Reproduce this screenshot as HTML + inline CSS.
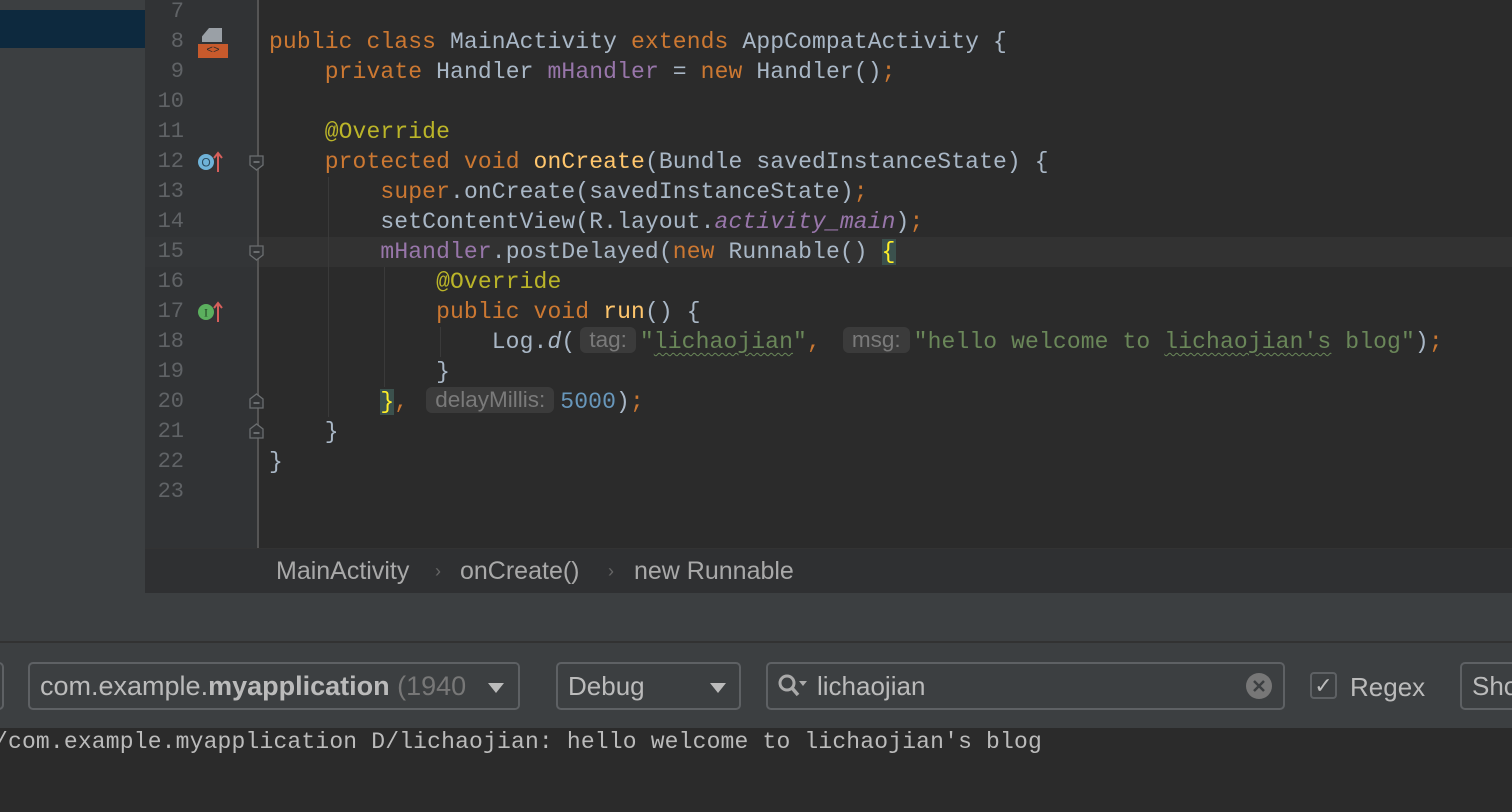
<!DOCTYPE html>
<html><head><meta charset="utf-8"><style>
*{margin:0;padding:0;box-sizing:border-box}
body{width:1512px;height:812px;overflow:hidden;background:#2b2b2b;position:relative;font-family:"Liberation Sans",sans-serif}
.abs{position:absolute}
.code{position:absolute;left:269px;font-family:"Liberation Mono",monospace;font-size:23px;letter-spacing:0.12px;color:#a9b7c6;white-space:pre;line-height:30px;height:30px}
.ln{position:absolute;left:140px;width:44px;text-align:right;font-family:"Liberation Mono",monospace;font-size:22px;color:#606366;line-height:30px}
.k{color:#cc7832}.f{color:#9876aa}.a{color:#bbb529}.s{color:#6a8759}.n{color:#6897bb}.m{color:#ffc66d}
.i{font-style:italic}
.w{text-decoration:underline wavy #6a8759;text-decoration-thickness:1px;text-underline-offset:4px}
.h{display:inline-block;background:#3b3b3b;color:#7a7a7a;font-family:"Liberation Sans",sans-serif;font-size:22.5px;letter-spacing:0;line-height:26px;border-radius:6px;padding:0 9px;vertical-align:1px}
.br{background:#3b514d;color:#ffef28}
.fold{position:absolute;left:249px;width:15px;height:16px}
.box{position:absolute;border:2px solid #5e6164;border-radius:5px;top:662px;height:48px;font-size:26px;color:#bbbbbb;line-height:44px;padding-left:10px}
.tri{position:absolute;width:0;height:0;border-left:8px solid transparent;border-right:8px solid transparent;border-top:10px solid #bbb;top:19px}
.bc{position:absolute;top:556px;font-size:25px;color:#a9a9a9;line-height:30px;white-space:pre}
.ar{position:absolute;top:556px;font-size:18px;color:#666;line-height:30px}
</style></head><body>
<div class="abs" style="left:0;top:0;width:145px;height:593px;background:#3c3f41"></div>
<div class="abs" style="left:0;top:10px;width:145px;height:38px;background:#0d293e"></div>
<div class="abs" style="left:145px;top:0;width:113px;height:548px;background:#313335"></div>
<div class="abs" style="left:257px;top:0;width:2px;height:548px;background:#555555"></div>
<div class="abs" style="left:259px;top:237px;width:1253px;height:30px;background:#323232"></div>
<div class="abs" style="left:145px;top:237px;width:112px;height:30px;background:#333537"></div>
<div class="abs" style="left:328px;top:177px;width:1px;height:240px;background:#3a3a3a"></div>
<div class="abs" style="left:384px;top:267px;width:1px;height:120px;background:#3a3a3a"></div>
<div class="abs" style="left:440px;top:327px;width:1px;height:30px;background:#3a3a3a"></div>

<div class="ln" style="top:-3px">7</div>
<div class="ln" style="top:27px">8</div>
<div class="ln" style="top:57px">9</div>
<div class="ln" style="top:87px">10</div>
<div class="ln" style="top:117px">11</div>
<div class="ln" style="top:147px">12</div>
<div class="ln" style="top:177px">13</div>
<div class="ln" style="top:207px">14</div>
<div class="ln" style="top:237px">15</div>
<div class="ln" style="top:267px">16</div>
<div class="ln" style="top:297px">17</div>
<div class="ln" style="top:327px">18</div>
<div class="ln" style="top:357px">19</div>
<div class="ln" style="top:387px">20</div>
<div class="ln" style="top:417px">21</div>
<div class="ln" style="top:447px">22</div>
<div class="ln" style="top:477px">23</div>

<div class="abs" style="left:202px;top:28px;width:20px;height:14px;background:#9aa0a6;clip-path:polygon(35% 0,100% 0,100% 100%,0 100%,0 60%)"></div>
<div class="abs" style="left:198px;top:44px;width:30px;height:14px;background:#c75a2c;color:#2b2b2b;font-size:11px;line-height:14px;text-align:center;font-family:'Liberation Mono',monospace">&lt;&gt;</div>
<svg class="abs" style="left:196px;top:148px" width="30" height="28"><circle cx="10" cy="14" r="8" fill="#6fb3d9"/><text x="10" y="18.5" font-size="12" text-anchor="middle" fill="#2b4a5e" font-family="Liberation Sans">O</text><path d="M22 24V5M18 10l4-5 4 5" stroke="#d55f5b" stroke-width="2" fill="none"/></svg>
<svg class="abs" style="left:196px;top:298px" width="30" height="28"><circle cx="10" cy="14" r="8" fill="#5bb05e"/><text x="10" y="18.5" font-size="12" text-anchor="middle" fill="#234a25" font-family="Liberation Serif">I</text><path d="M22 24V5M18 10l4-5 4 5" stroke="#d55f5b" stroke-width="2" fill="none"/></svg>
<svg class="fold" style="top:155px" viewBox="0 0 15 16"><path d="M1 1H14V10L7.5 15L1 10Z" fill="#313335" stroke="#6b6e70" stroke-width="1.3"/><path d="M4.5 7H10.5" stroke="#8a8d90" stroke-width="1.3"/></svg>
<svg class="fold" style="top:245px" viewBox="0 0 15 16"><path d="M1 1H14V10L7.5 15L1 10Z" fill="#333537" stroke="#6b6e70" stroke-width="1.3"/><path d="M4.5 7H10.5" stroke="#8a8d90" stroke-width="1.3"/></svg>
<svg class="fold" style="top:393px" viewBox="0 0 15 16"><path d="M1 15H14V6L7.5 1L1 6Z" fill="#313335" stroke="#6b6e70" stroke-width="1.3"/><path d="M4.5 10H10.5" stroke="#8a8d90" stroke-width="1.3"/></svg>
<svg class="fold" style="top:423px" viewBox="0 0 15 16"><path d="M1 15H14V6L7.5 1L1 6Z" fill="#313335" stroke="#6b6e70" stroke-width="1.3"/><path d="M4.5 10H10.5" stroke="#8a8d90" stroke-width="1.3"/></svg>

<div class="code" style="top:27px"><span class="k">public class </span>MainActivity <span class="k">extends </span>AppCompatActivity {</div>
<div class="code" style="top:57px">    <span class="k">private </span>Handler <span class="f">mHandler </span>= <span class="k">new </span>Handler()<span class="k">;</span></div>
<div class="code" style="top:117px">    <span class="a">@Override</span></div>
<div class="code" style="top:147px">    <span class="k">protected void </span><span class="m">onCreate</span>(Bundle savedInstanceState) {</div>
<div class="code" style="top:177px">        <span class="k">super</span>.onCreate(savedInstanceState)<span class="k">;</span></div>
<div class="code" style="top:207px">        setContentView(R.layout.<span class="f i">activity_main</span>)<span class="k">;</span></div>
<div class="code" style="top:237px">        <span class="f">mHandler</span>.postDelayed(<span class="k">new </span>Runnable() <span class="br">{</span></div>
<div class="code" style="top:267px">            <span class="a">@Override</span></div>
<div class="code" style="top:297px">            <span class="k">public void </span><span class="m">run</span>() {</div>
<div class="code" style="top:327px">                Log.<span class="i">d</span>(<span class="h" style="margin:0 4px 0 5px">tag:</span><span class="s">"<span class="w">lichaojian</span>"</span><span class="k">,</span><span class="h" style="margin:0 4px 0 22px">msg:</span><span class="s">"hello welcome to <span class="w">lichaojian's</span> blog"</span>)<span class="k">;</span></div>
<div class="code" style="top:357px">            }</div>
<div class="code" style="top:387px">        <span class="br">}</span><span class="k">,</span><span class="h" style="margin:0 6px 0 18px">delayMillis:</span><span class="n">5000</span>)<span class="k">;</span></div>
<div class="code" style="top:417px">    }</div>
<div class="code" style="top:447px">}</div>

<div class="abs" style="left:145px;top:548px;width:1367px;height:45px;background:#2f3032;border-top:1px solid #333"></div>
<div class="bc" style="left:276px">MainActivity</div>
<div class="ar" style="left:435px">›</div>
<div class="bc" style="left:460px">onCreate()</div>
<div class="ar" style="left:608px">›</div>
<div class="bc" style="left:634px">new Runnable</div>

<div class="abs" style="left:0;top:593px;width:1512px;height:135px;background:#3c3f41"></div>
<div class="abs" style="left:0;top:641px;width:1512px;height:2px;background:#323232"></div>

<div class="box" style="left:-10px;width:14px"></div>
<div class="box" style="left:28px;width:492px;white-space:nowrap;overflow:hidden;font-size:27px">com.example.<b>myapplication</b> <span style="color:#777">(1940</span><div class="abs" style="left:442px;top:0;width:60px;height:44px;background:#3c3f41"></div><div class="tri" style="left:458px"></div></div>
<div class="box" style="left:556px;width:185px">Debug<div class="tri" style="left:152px"></div></div>
<div class="box" style="left:766px;width:519px;padding-left:49px">lichaojian
<svg class="abs" style="left:8px;top:8px" width="40" height="28"><circle cx="11" cy="11" r="7" fill="none" stroke="#aaa" stroke-width="3"/><path d="M16 16L22 23" stroke="#aaa" stroke-width="3.5"/><path d="M23 9h8l-4 5z" fill="#aaa"/></svg>
<svg class="abs" style="left:477px;top:8px" width="28" height="28"><circle cx="14" cy="14" r="13" fill="#777"/><path d="M9 9L19 19M19 9L9 19" stroke="#3c3f41" stroke-width="2.5"/></svg>
</div>
<div class="abs" style="left:1310px;top:672px;width:27px;height:27px;border:2px solid #5e6164;border-radius:4px;color:#bbb;font-size:22px;line-height:23px;text-align:center">✓</div>
<div class="abs" style="left:1350px;top:670px;font-size:26px;color:#bbb;line-height:34px">Regex</div>
<div class="box" style="left:1460px;width:70px">Sho</div>

<div class="abs" style="left:-6px;top:727px;font-family:'Liberation Mono',monospace;font-size:23px;letter-spacing:0.17px;color:#bbbbbb;white-space:pre;line-height:30px">/com.example.myapplication D/lichaojian: hello welcome to lichaojian's blog</div>
</body></html>
